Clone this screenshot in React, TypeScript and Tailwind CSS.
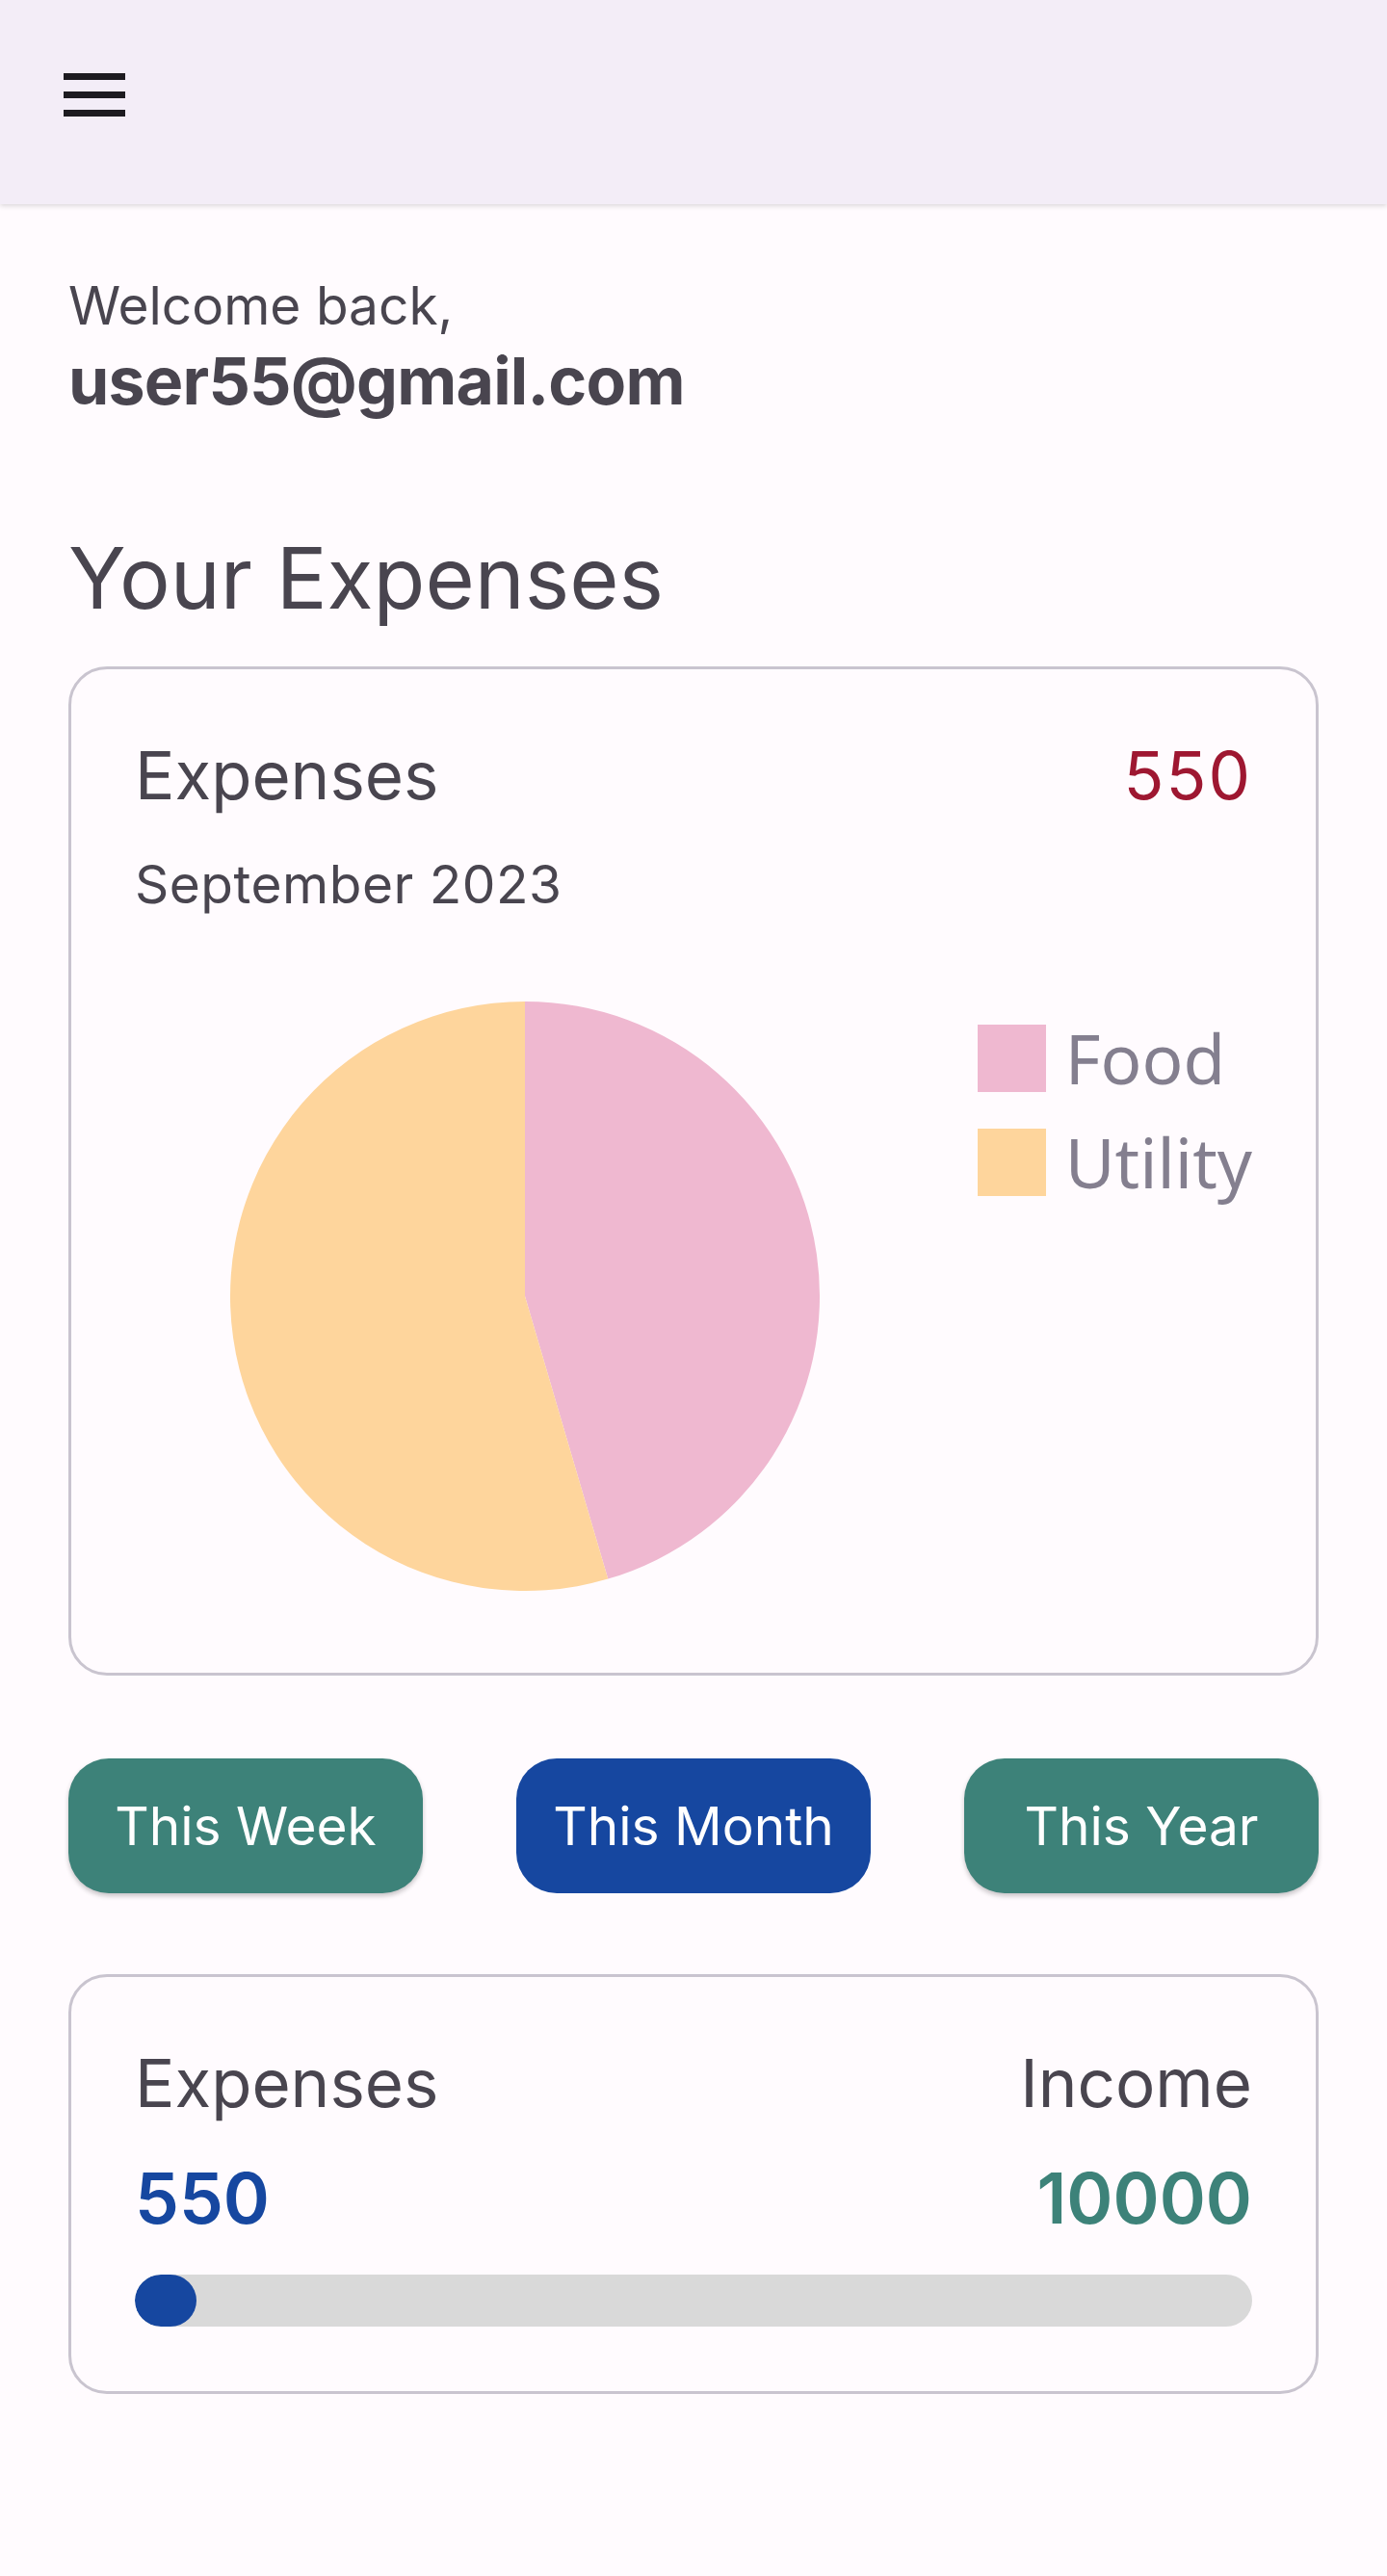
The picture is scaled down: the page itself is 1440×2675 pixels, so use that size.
import React from "react";

const FOOD = 250;
const UTILITY = 300;

function Pie() {
  const r = 306;
  const total = FOOD + UTILITY;
  const ang = (FOOD / total) * 2 * Math.PI;
  const ex = r + r * Math.sin(ang);
  const ey = r - r * Math.cos(ang);
  const large = FOOD / total > 0.5 ? 1 : 0;
  return (
    <svg width="612" height="612" viewBox="0 0 612 612" className="block shrink-0">
      <path d={`M${r},${r} L${r},0 A${r},${r} 0 ${large} 1 ${ex},${ey} Z`} fill="#efb8d0" />
      <path d={`M${r},${r} L${ex},${ey} A${r},${r} 0 ${1 - large} 1 ${r},0 Z`} fill="#fed59c" />
    </svg>
  );
}

export default function App() {
  const pct = (550 / 10000) * 100;
  return (
    <div
      className="min-h-screen bg-[#fffbfe] text-[#49454f]"
      style={{ fontFamily: "Inter, 'Noto Sans', sans-serif" }}
    >
      <header className="h-[212px] bg-[#f3edf7] shadow-[0_2px_5px_rgba(0,0,0,0.14)] pl-[66px] pt-[76px] relative z-10">
        <svg width="64" height="45" viewBox="0 0 64 45" className="block">
          <rect x="0" y="0" width="64" height="7" fill="#1d1b20" />
          <rect x="0" y="19" width="64" height="7" fill="#1d1b20" />
          <rect x="0" y="38" width="64" height="7" fill="#1d1b20" />
        </svg>
      </header>

      <main className="px-[71px] pt-[72px] pb-[190px]">
        <p className="text-[55px] leading-[66px]">Welcome back,</p>
        <p className="mt-[4px] text-[68px] leading-[83px] font-bold tracking-[-0.8px]">user55@gmail.com</p>

        <h2 className="mt-[110px] text-[88px] leading-[106px]">Your Expenses</h2>

        <section className="mt-[39px] border-[3px] border-[#c9c4cf] rounded-[40px] px-[66px] pt-[69px] pb-[85px]">
          <div className="flex justify-between items-start">
            <span className="text-[69px] leading-[83px]">Expenses</span>
            <span className="text-[69px] leading-[83px] tracking-[2px] text-[#9e1731]">550</span>
          </div>
          <p className="mt-[39px] text-[55px] leading-[65px] tracking-[0.5px]">September 2023</p>
          <div className="mt-[89px] flex items-start">
            <div className="ml-[99px]">
              <Pie />
            </div>
            <div
              className="ml-auto mt-[24px] flex flex-col gap-[38px] text-[#847f8f]"
              style={{ fontFamily: "'Noto Sans', sans-serif" }}
            >
              <div className="flex items-center gap-[20px] h-[70px]">
                <span className="w-[71px] h-[70px] bg-[#efb8d0] block" />
                <span className="text-[71px] leading-[70px]">Food</span>
              </div>
              <div className="flex items-center gap-[20px] h-[70px]">
                <span className="w-[71px] h-[70px] bg-[#fed59c] block" />
                <span className="text-[71px] leading-[70px]">Utility</span>
              </div>
            </div>
          </div>
        </section>

        <div className="mt-[86px] flex justify-between">
          <button className="w-[368px] h-[140px] rounded-[42px] bg-[#3d8279] text-white text-[55px] shadow-[0_3px_5px_rgba(0,0,0,0.22)]">
            This Week
          </button>
          <button className="w-[368px] h-[140px] rounded-[42px] bg-[#1647a0] text-white text-[55px]">
            This Month
          </button>
          <button className="w-[368px] h-[140px] rounded-[42px] bg-[#3d8279] text-white text-[55px] shadow-[0_3px_5px_rgba(0,0,0,0.22)]">
            This Year
          </button>
        </div>

        <section className="mt-[84px] border-[3px] border-[#c9c4cf] rounded-[40px] px-[66px] pt-[69px] pb-[67px]">
          <div className="flex justify-between items-start">
            <span className="text-[69px] leading-[83px]">Expenses</span>
            <span className="text-[69px] leading-[83px]">Income</span>
          </div>
          <div className="mt-[34px] flex justify-between items-start">
            <span className="text-[73px] leading-[88px] font-semibold text-[#1647a0]">550</span>
            <span className="text-[73px] leading-[88px] font-semibold text-[#3d8279]">10000</span>
          </div>
          <div className="mt-[35px] h-[54px] rounded-full bg-[#d9d9d9] overflow-hidden">
            <div className="h-full rounded-full bg-[#1647a0]" style={{ width: `${pct}%` }} />
          </div>
        </section>
      </main>
    </div>
  );
}
